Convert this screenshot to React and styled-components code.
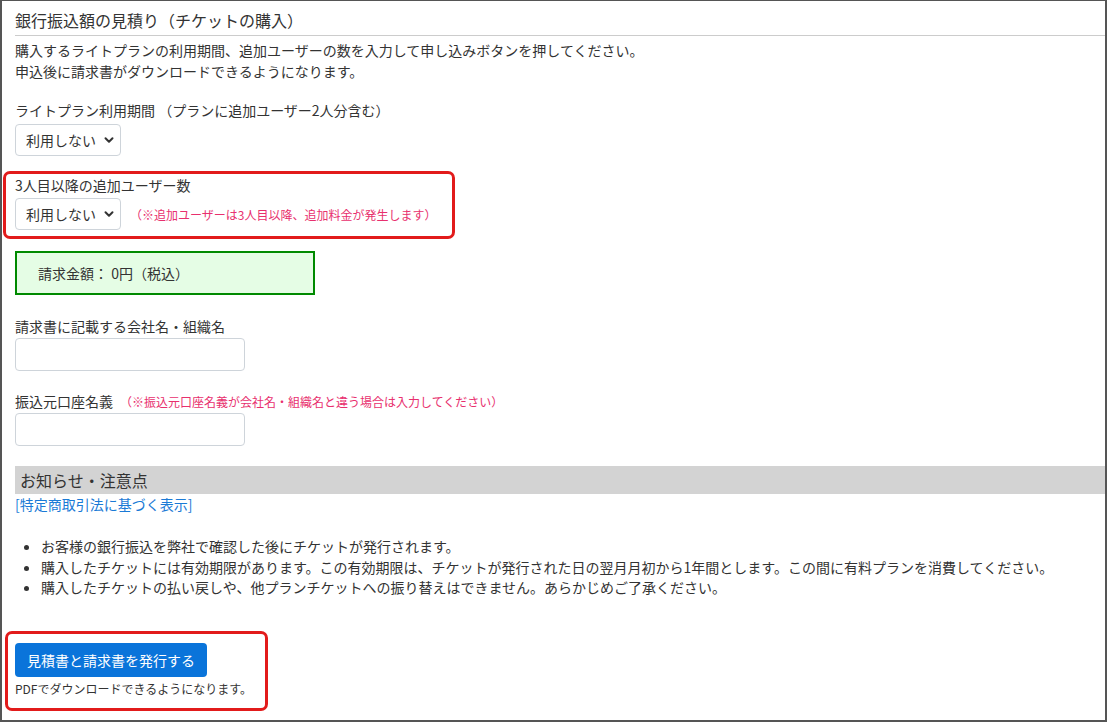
import React from 'react';
import styled, { createGlobalStyle } from 'styled-components';
import { ChevronDown } from 'lucide-react';

const GlobalStyle = createGlobalStyle`
    html, body {
        margin: 0;
        padding: 0;
        background: #fff;
    }
    body {
        font-family: "Noto Sans CJK JP", "Noto Sans", sans-serif;
        color: #333;
    }
`;

const notices = [
    'お客様の銀行振込を弊社で確認した後にチケットが発行されます。',
    '購入したチケットには有効期限があります。この有効期限は、チケットが発行された日の翌月月初から1年間とします。この間に有料プランを消費してください。',
    '購入したチケットの払い戻しや、他プランチケットへの振り替えはできません。あらかじめご了承ください。',
];

function PlanSelect() {
    return (
        <SelectWrap>
            <Select defaultValue="none">
                <option value="none">利用しない</option>
            </Select>
            <Chevron size={14} strokeWidth={3.4} />
        </SelectWrap>
    );
}

function App() {
    return (
        <>
            <GlobalStyle />
            <Frame>
                <Title>銀行振込額の見積り（チケットの購入）</Title>
                <Description>
                    購入するライトプランの利用期間、追加ユーザーの数を入力して申し込みボタンを押してください。<br />
                    申込後に請求書がダウンロードできるようになります。
                </Description>

                <Label $top={18}>ライトプラン利用期間 （プランに追加ユーザー2人分含む）</Label>
                <FieldRow $gap={3}>
                    <PlanSelect />
                </FieldRow>

                <Highlight $top={15} $width={452} $pt={1} $pb={6} $ml={-12} $pl={9}>
                    <Label $top={0}>3人目以降の追加ユーザー数</Label>
                    <FieldRow $gap={2}>
                        <PlanSelect />
                        <Note>（※追加ユーザーは3人目以降、追加料金が発生します）</Note>
                    </FieldRow>
                </Highlight>

                <TotalBox>請求金額： 0円（税込）</TotalBox>

                <Label $top={21}>請求書に記載する会社名・組織名</Label>
                <TextInput type="text" />

                <Label $top={20}>
                    振込元口座名義<Note $indent={7}>（※振込元口座名義が会社名・組織名と違う場合は入力してください）</Note>
                </Label>
                <TextInput type="text" />

                <SectionBar>お知らせ・注意点</SectionBar>
                <LegalLink href="#">[特定商取引法に基づく表示]</LegalLink>

                <NoticeList>
                    {notices.map((text) => (
                        <li key={text}>{text}</li>
                    ))}
                </NoticeList>

                <Highlight $top={33} $width={263} $pt={9} $pb={10} $ml={-10} $pl={7}>
                    <IssueButton>見積書と請求書を発行する</IssueButton>
                    <SmallNote>PDFでダウンロードできるようになります。</SmallNote>
                </Highlight>
            </Frame>
        </>
    );
}

export default App;

const Frame = styled.div`
    width: 1107px;
    height: 722px;
    box-sizing: border-box;
    border: 2px solid #555;
    border-top-width: 1px;
    padding-left: 13px;
    display: flex;
    flex-direction: column;
    align-items: flex-start;
    overflow: hidden;
`;

const Title = styled.h2`
    align-self: stretch;
    margin: 8px 0 0;
    padding-bottom: 4px;
    font-size: 16px;
    line-height: 22px;
    font-weight: normal;
    color: #333;
    border-bottom: 1px solid #ccc;
`;

const Description = styled.p`
    margin: 4px 0 0;
    font-size: 14px;
    line-height: 21px;
`;

const Label = styled.div`
    margin-top: ${(p) => p.$top}px;
    font-size: 14px;
    line-height: 21px;
    display: flex;
    align-items: baseline;
`;

const FieldRow = styled.div`
    margin-top: ${(p) => p.$gap}px;
    display: flex;
    align-items: center;
    gap: 9px;
`;

const SelectWrap = styled.div`
    position: relative;
    width: 106px;
    height: 32px;
`;

const Select = styled.select`
    appearance: none;
    width: 100%;
    height: 100%;
    box-sizing: border-box;
    border: 1px solid #ced4da;
    border-radius: 4px;
    background: #fff;
    padding: 0 0 0 10px;
    font-family: inherit;
    font-size: 14px;
    color: #333;
    outline: none;
`;

const Chevron = styled(ChevronDown)`
    position: absolute;
    right: 5px;
    top: 9px;
    color: #333;
    pointer-events: none;
`;

const Note = styled.span`
    font-size: 12px;
    color: #e8306e;
    white-space: nowrap;
    margin-left: ${(p) => (p.$indent ? p.$indent : 0)}px;
`;

const Highlight = styled.div`
    margin-top: ${(p) => p.$top}px;
    margin-left: ${(p) => p.$ml}px;
    width: ${(p) => p.$width}px;
    box-sizing: border-box;
    border: 3px solid #e21b1b;
    border-radius: 7px;
    padding: ${(p) => p.$pt}px 0 ${(p) => p.$pb}px ${(p) => p.$pl}px;
`;

const TotalBox = styled.div`
    margin-top: 12px;
    width: 300px;
    height: 44px;
    box-sizing: border-box;
    border: 2px solid #008a00;
    background: #e5fde5;
    padding-left: 21px;
    display: flex;
    align-items: center;
    font-size: 14px;
`;

const TextInput = styled.input`
    margin-top: 1px;
    width: 230px;
    height: 33px;
    box-sizing: border-box;
    border: 1px solid #ced4da;
    border-radius: 4px;
    background: #fff;
    outline: none;
`;

const SectionBar = styled.div`
    align-self: stretch;
    margin-top: 20px;
    height: 28px;
    background: #d3d3d3;
    padding-left: 5px;
    display: flex;
    align-items: center;
    font-size: 16px;
    color: #333;
`;

const LegalLink = styled.a`
    font-size: 14px;
    line-height: 20px;
    color: #1a7ad6;
    text-decoration: none;
`;

const NoticeList = styled.ul`
    margin: 22px 0 0;
    padding-left: 26px;
    font-size: 14px;
    line-height: 20.5px;
`;

const IssueButton = styled.button`
    height: 34px;
    padding: 0 12px;
    border: none;
    border-radius: 4px;
    background: #0a74da;
    color: #fff;
    font-family: inherit;
    font-size: 14px;
    cursor: pointer;
`;

const SmallNote = styled.div`
    margin-top: 3px;
    font-size: 12px;
    line-height: 18px;
    color: #333;
`;
